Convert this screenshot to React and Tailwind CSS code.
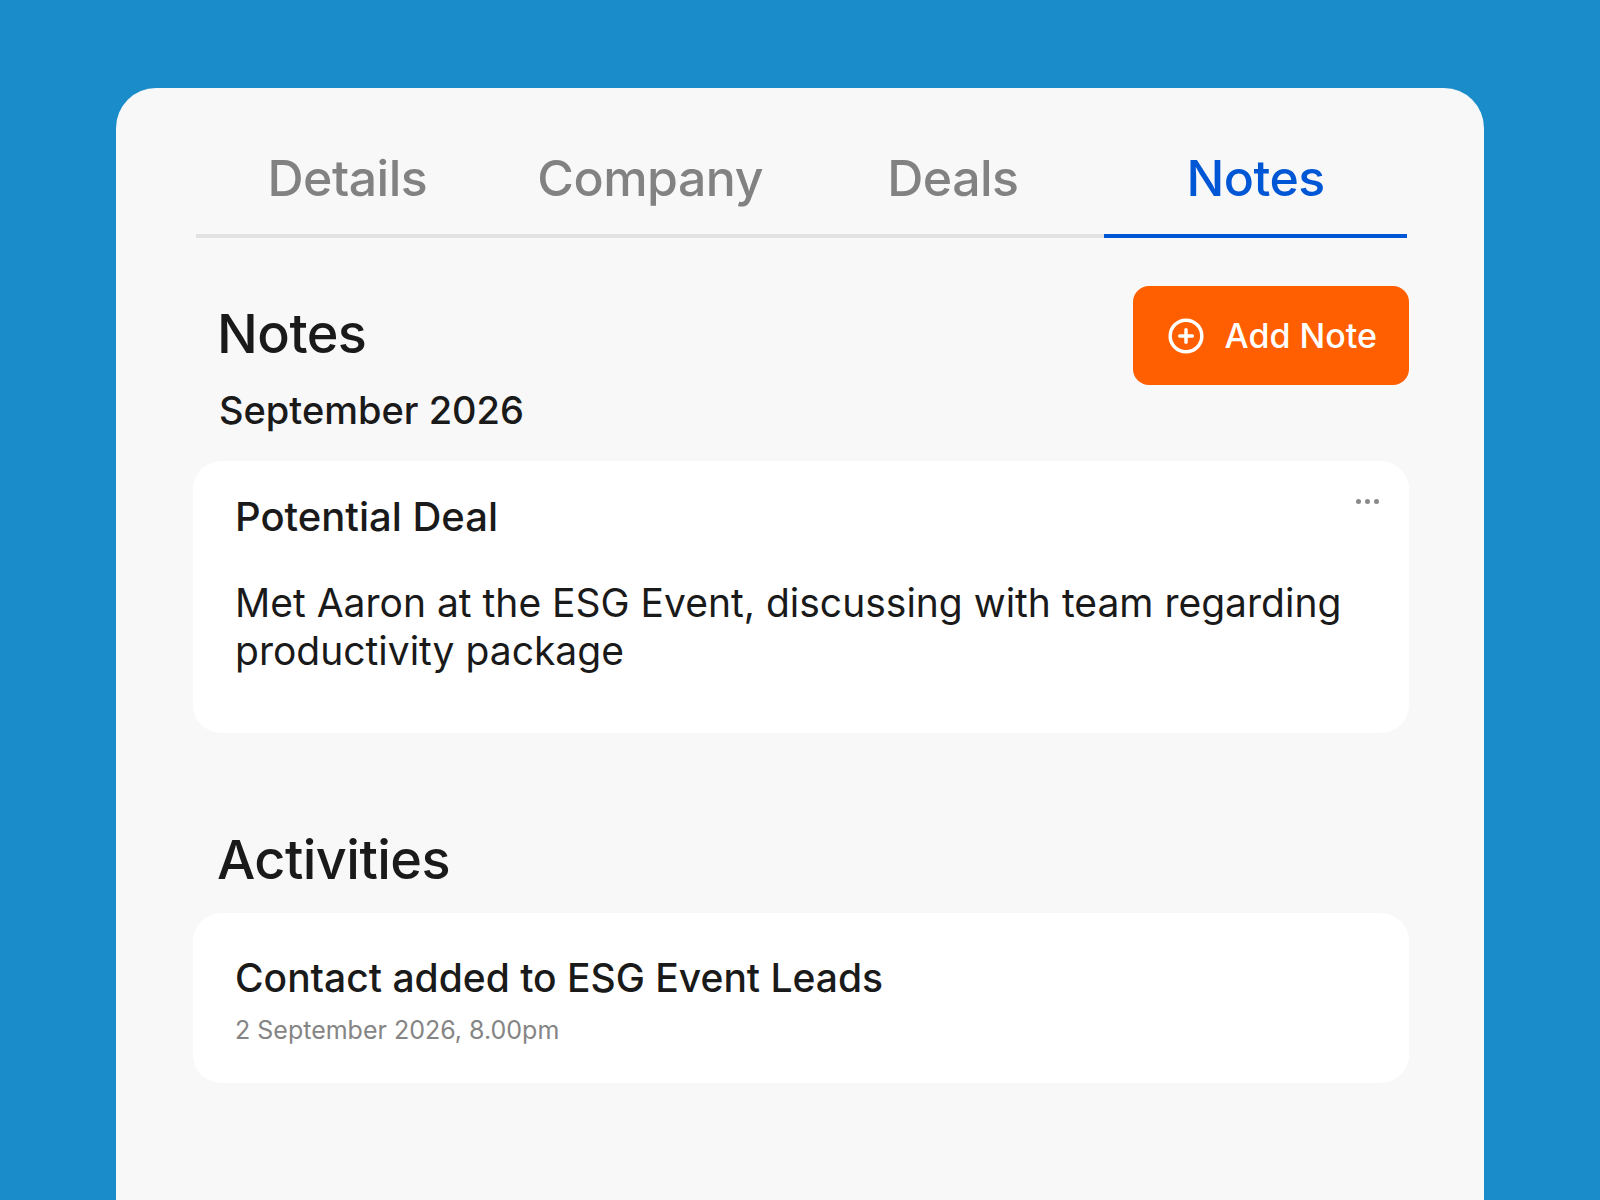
import React from "react";
import { CirclePlus } from "lucide-react";

const tabs = ["Details", "Company", "Deals", "Notes"];

export default function App() {
  const active = "Notes";

  return (
    <div
      className="h-screen overflow-hidden bg-[#1b8cca] px-[116px] pt-[88px]"
      style={{ fontFamily: "Inter, 'Liberation Sans', sans-serif" }}
    >
      <div className="h-[1200px] rounded-t-[40px] bg-[#f8f8f8] pl-[77px] pr-[75px] pt-[65px]">
        {/* Tabs */}
        <div className="ml-[3px] mr-[2px] flex">
          {tabs.map((t) => (
            <div
              key={t}
              className={
                "flex-1 border-b-4 pb-[31px] text-center text-[50px] leading-none font-medium tracking-[-0.01em] " +
                (t === active
                  ? "border-[#0057d6] text-[#0057d6]"
                  : "border-[#e2e2e2] text-[#828282]")
              }
            >
              {t}
            </div>
          ))}
        </div>

        {/* Notes header */}
        <div className="mt-[48px] flex items-start justify-between">
          <div className="pl-[24px] pt-[21px]">
            <h2 className="text-[54px] leading-none font-medium tracking-[-0.01em] text-[#1a1a1a]">
              Notes
            </h2>
            <div className="mt-[30px] pl-[2px] text-[38px] leading-none font-medium text-[#1a1a1a]">
              September 2026
            </div>
          </div>
          <button className="flex h-[99px] items-center gap-[20px] rounded-[16px] bg-[#ff5f00] pl-[34px] pr-[32px] text-[34px] font-medium text-white">
            <CirclePlus size={38} strokeWidth={2.2} />
            Add Note
          </button>
        </div>

        {/* Note card */}
        <div className="relative mt-[32px] h-[272px] rounded-[28px] bg-white px-[42px] pt-[36px]">
          <div className="absolute right-[30px] top-[38px] flex gap-[4px]">
            <span className="h-[5px] w-[5px] rounded-full bg-[#8a8a8a]" />
            <span className="h-[5px] w-[5px] rounded-full bg-[#8a8a8a]" />
            <span className="h-[5px] w-[5px] rounded-full bg-[#8a8a8a]" />
          </div>
          <div className="text-[40px] leading-none font-medium text-[#1a1a1a]">
            Potential Deal
          </div>
          <p className="mt-[42px] text-[39px] leading-[48px] text-[#1a1a1a]">
            Met Aaron at the ESG Event, discussing with team regarding
            <br />
            productivity package
          </p>
        </div>

        {/* Activities */}
        <h2 className="mt-[100px] pl-[24px] text-[54px] leading-none font-medium tracking-[-0.01em] text-[#1a1a1a]">
          Activities
        </h2>
        <div className="mt-[26px] h-[170px] rounded-[28px] bg-white px-[42px] pt-[45px]">
          <div className="text-[39px] leading-none font-medium text-[#1a1a1a]">
            Contact added to ESG Event Leads
          </div>
          <div className="mt-[21px] text-[25px] leading-none text-[#858585]">
            2 September 2026, 8.00pm
          </div>
        </div>
      </div>
    </div>
  );
}
